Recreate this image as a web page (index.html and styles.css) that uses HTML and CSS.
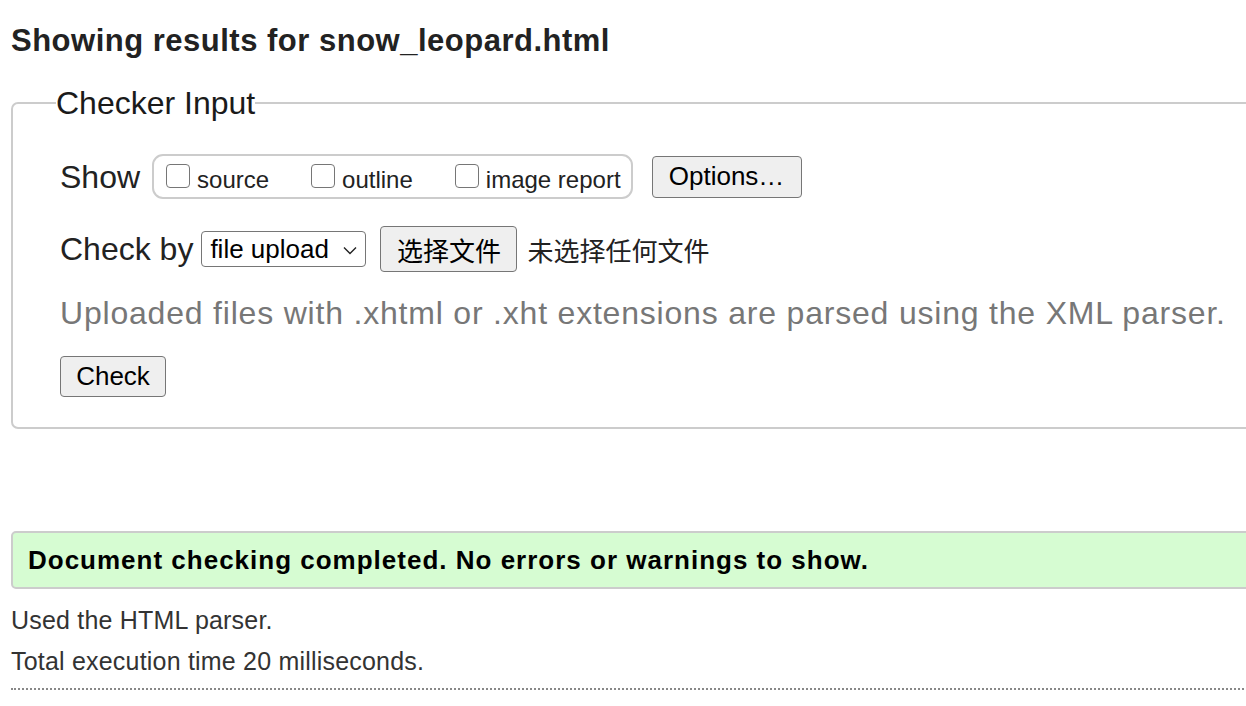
FILE: index.html
```html
<!DOCTYPE html>
<html lang="en">
<head>
<meta charset="utf-8">
<title>Showing results for snow_leopard.html - Nu Html Checker</title>
<link rel="stylesheet" href="styles.css">
</head>
<body>
<h1 class="title">Showing results for snow_leopard.html</h1>
<form class="checker">
  <fieldset class="input-set">
    <legend class="legend">Checker Input</legend>
    <div class="row show-row">
      <span class="label">Show</span>
      <div class="opts">
        <label class="opt"><span class="box"></span>source</label>
        <label class="opt"><span class="box"></span>outline</label>
        <label class="opt"><span class="box"></span>image report</label>
      </div>
      <button type="button" class="btn btn-options">Options…</button>
    </div>
    <div class="row by-row">
      <span class="label">Check by</span>
      <span class="select">file upload<svg class="chev" width="14" height="9" viewBox="0 0 14 9"><path d="M1 1.5 L7 7.5 L13 1.5" fill="none" stroke="#222" stroke-width="1.4"/></svg></span>
      <button type="button" class="btn btn-file">选择文件</button>
      <span class="nofile">未选择任何文件</span>
    </div>
    <p class="note">Uploaded files with .xhtml or .xht extensions are parsed using the XML parser.</p>
    <div class="row submit-row">
      <button type="button" class="btn btn-check">Check</button>
    </div>
  </fieldset>
</form>
<div class="success">Document checking completed. No errors or warnings to show.</div>
<p class="info first">Used the HTML parser.</p>
<p class="info">Total execution time 20 milliseconds.</p>
<div class="dots"></div>
</body>
</html>
```
FILE: styles.css
```css
html, body {
  margin: 0;
  padding: 0;
  overflow: hidden;
  background: #fff;
}
body {
  padding-left: 11px;
  font-family: "Liberation Sans", Arial, sans-serif;
  color: #222;
  width: 1400px;
}
.title {
  margin: 24px 0 0 0;
  font-size: 31px;
  line-height: 34px;
  font-weight: 700;
  color: #222;
  letter-spacing: 0.5px;
}
.checker {
  margin-top: 28px;
}
.input-set {
  margin: 0;
  border: 2px solid #ccc;
  border-radius: 7px;
  padding: 0 0 30px 47px;
}
.legend {
  font-size: 32px;
  line-height: 34px;
  padding: 0;
  margin-left: -4px;
  color: #1a1a1a;
}
.row {
  display: flex;
  align-items: center;
}
.label {
  font-size: 32px;
  line-height: 40px;
  color: #222;
}
.show-row {
  margin-top: 34px;
  height: 45px;
}
.opts {
  margin-left: 12px;
  height: 45px;
  box-sizing: border-box;
  border: 2px solid #ccc;
  border-radius: 11px;
  display: flex;
  align-items: center;
  padding: 0 10px 0 12px;
}
.opt {
  display: flex;
  align-items: center;
  font-size: 24px;
  color: #222;
  margin-right: 42px;
  position: relative;
  top: 3px;
}
.opt:last-child {
  margin-right: 0;
}
.box {
  width: 22px;
  height: 22px;
  border: 1.5px solid #767676;
  border-radius: 4px;
  margin-right: 7px;
  position: relative;
  top: -4px;
  background: #fff;
}
.btn {
  font-family: "Liberation Sans", Arial, sans-serif;
  font-size: 26px;
  color: #000;
  background: #efefef;
  border: 1.5px solid #767676;
  border-radius: 4px;
  box-sizing: border-box;
  padding: 0 15px;
  margin: 0;
  cursor: default;
}
.btn-options {
  margin-left: 19px;
  height: 42px;
  width: 150px;
}
.by-row {
  margin-top: 27px;
  height: 46px;
}
.select {
  margin-left: 8px;
  height: 36px;
  width: 165px;
  box-sizing: border-box;
  border: 1.5px solid #767676;
  border-radius: 4px;
  font-size: 26px;
  color: #000;
  display: flex;
  align-items: center;
  justify-content: space-between;
  padding: 0 8px 0 8px;
  background: #fff;
}
.chev {
  margin-top: 2px;
}
.btn-file {
  margin-left: 14px;
  height: 46px;
  width: 137px;
  font-family: "Liberation Sans", "Noto Sans CJK SC", sans-serif;
  padding: 0;
}
.nofile {
  margin-left: 10px;
  font-size: 26px;
  font-family: "Noto Sans CJK SC", sans-serif;
  color: #222;
}
.note {
  margin: 21px 0 0 0;
  font-size: 32px;
  line-height: 40px;
  color: #777;
  letter-spacing: 0.8px;
}
.submit-row {
  margin-top: 23px;
}
.btn-check {
  height: 41px;
  width: 106px;
  padding: 0;
}
.success {
  margin-top: 102px;
  height: 58px;
  box-sizing: border-box;
  border: 2px solid #ccc;
  border-radius: 5px;
  background: #d6fcd2;
  display: flex;
  align-items: center;
  padding-left: 15px;
  font-size: 26px;
  font-weight: 700;
  color: #000;
  letter-spacing: 1px;
}
.info {
  margin: 0;
  font-size: 25px;
  line-height: 30px;
  color: #333;
  letter-spacing: 0.2px;
}
.info.first {
  margin-top: 16px;
}
.info + .info {
  margin-top: 11px;
}
.dots {
  margin-top: 12px;
  border-top: 2px dotted #888;
  height: 0;
}
```
